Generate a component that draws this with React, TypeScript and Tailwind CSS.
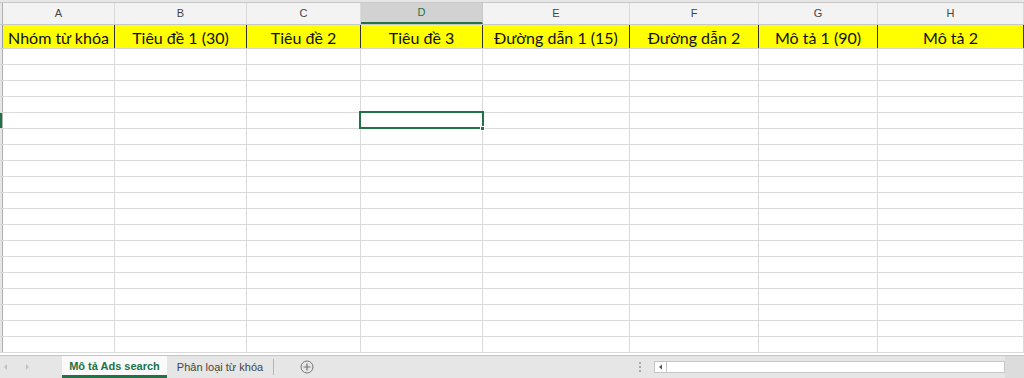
import React from "react";

const cols = [
  { w: "w-[112px]", l: "A", t: "Nhóm từ khóa" },
  { w: "w-[132px]", l: "B", t: "Tiêu đề 1 (30)" },
  { w: "w-[114px]", l: "C", t: "Tiêu đề 2" },
  { w: "w-[122px]", l: "D", t: "Tiêu đề 3" },
  { w: "w-[147px]", l: "E", t: "Đường dẫn 1 (15)" },
  { w: "w-[129px]", l: "F", t: "Đường dẫn 2" },
  { w: "w-[119px]", l: "G", t: "Mô tả 1 (90)" },
  { w: "flex-1", l: "H", t: "Mô tả 2" },
];

const ROWS = 19;

export default function App() {
  return (
    <div className="w-[1024px] h-[378px] overflow-hidden bg-white flex flex-col font-['Lato',sans-serif] relative">
      {/* top strip */}
      <div className="h-[3px] bg-[#e6e6e6] border-b border-[#c8c8c8] shrink-0" />
      {/* column headers */}
      <div className="flex h-[22px] shrink-0 bg-[#f3f3f3] border-b border-[#c8c8c8]">
        <div className="w-[3px] border-r border-[#b0b0b0] bg-[#e6e6e6]" />
        {cols.map((c) => (
          <div
            key={c.l}
            className={`${c.w} shrink-0 flex items-center justify-center text-[11px] font-['Liberation_Sans',sans-serif] ${
              c.l === "D"
                ? "bg-[#d2d2d2] text-[#217346] border-b-2 border-b-[#217346] border-r border-r-[#c8c8c8]"
                : "text-[#444] border-r border-[#dadada]"
            }`}
          >
            {c.l}
          </div>
        ))}
      </div>
      {/* yellow row */}
      <div className="flex h-[24px] shrink-0 border-b border-[#d4d4d4]">
        <div className="w-[3px] border-r border-[#9a9a9a] bg-[#e6e6e6]" />
        {cols.map((c) => (
          <div
            key={c.l}
            className={`${c.w} shrink-0 bg-[#ffff00] flex items-center justify-center text-[16px] text-[#111] border-r border-[#333] leading-none pt-[2px] whitespace-nowrap`}
          >
            {c.t}
          </div>
        ))}
      </div>
      {/* empty rows */}
      <div className="flex-1 overflow-hidden">
        {Array.from({ length: ROWS }).map((_, r) => (
          <div key={r} className="flex h-[16px] border-b border-[#dadada]">
            <div
              className={`w-[3px] border-r border-[#b0b0b0] ${
                r === 4 ? "bg-[#217346]" : "bg-[#e6e6e6]"
              }`}
            />
            {cols.map((c) => (
              <div key={c.l} className={`${c.w} shrink-0 border-r border-[#dadada]`} />
            ))}
          </div>
        ))}
      </div>
      {/* selection */}
      <div className="absolute left-[359px] top-[111px] w-[125px] h-[18px] border-2 border-[#217346]" />
      <div className="absolute left-[480px] top-[126px] w-[5px] h-[5px] bg-[#217346] border border-white" />
      {/* tab bar */}
      <div className="h-[23px] shrink-0 bg-[#e6e6e6] border-t border-[#c6c6c6] flex items-stretch text-[11px] font-['Liberation_Sans',sans-serif]">
        <div className="w-[62px] flex items-center shrink-0">
          <svg width="62" height="22" viewBox="0 0 62 22">
            <path d="M7 8 L4 11 L7 14 Z" fill="#c2c2c2" />
            <path d="M26 8 L29 11 L26 14 Z" fill="#c2c2c2" />
          </svg>
        </div>
        <div className="w-[105px] bg-[#fafafa] flex items-center justify-center font-bold text-[#217346] border-b-[3px] border-[#217346] pt-[2px]">
          Mô tả Ads search
        </div>
        <div className="w-[106px] flex items-center justify-center text-[#444]">
          Phân loại từ khóa
        </div>
        <div className="w-px my-[3px] bg-[#b5b5b5]" />
        <div className="w-[66px] flex items-center justify-center">
          <svg width="14" height="14" viewBox="0 0 14 14">
            <circle cx="7" cy="7" r="6" fill="none" stroke="#777" strokeWidth="1" />
            <path d="M7 3.5 V10.5 M3.5 7 H10.5" stroke="#777" strokeWidth="1.2" />
          </svg>
        </div>
        <div className="flex-1" />
        <div className="w-[13px] flex flex-col items-center justify-center gap-[2px] mr-[1px]">
          <div className="w-[2px] h-[2px] bg-[#a8a8a8]" />
          <div className="w-[2px] h-[2px] bg-[#a8a8a8]" />
          <div className="w-[2px] h-[2px] bg-[#a8a8a8]" />
        </div>
        <div className="w-[7px]" />
        <div className="w-[351px] my-[7px] h-[12px] self-center bg-white border border-[#c6c6c6] flex">
          <div className="w-[12px] border-r border-[#c6c6c6] flex items-center justify-center">
            <svg width="6" height="6" viewBox="0 0 6 6">
              <path d="M4 0.5 L1 3 L4 5.5 Z" fill="#555" />
            </svg>
          </div>
        </div>
        <div className="w-[19px] bg-[#dcdcdc]" />
      </div>
    </div>
  );
}
